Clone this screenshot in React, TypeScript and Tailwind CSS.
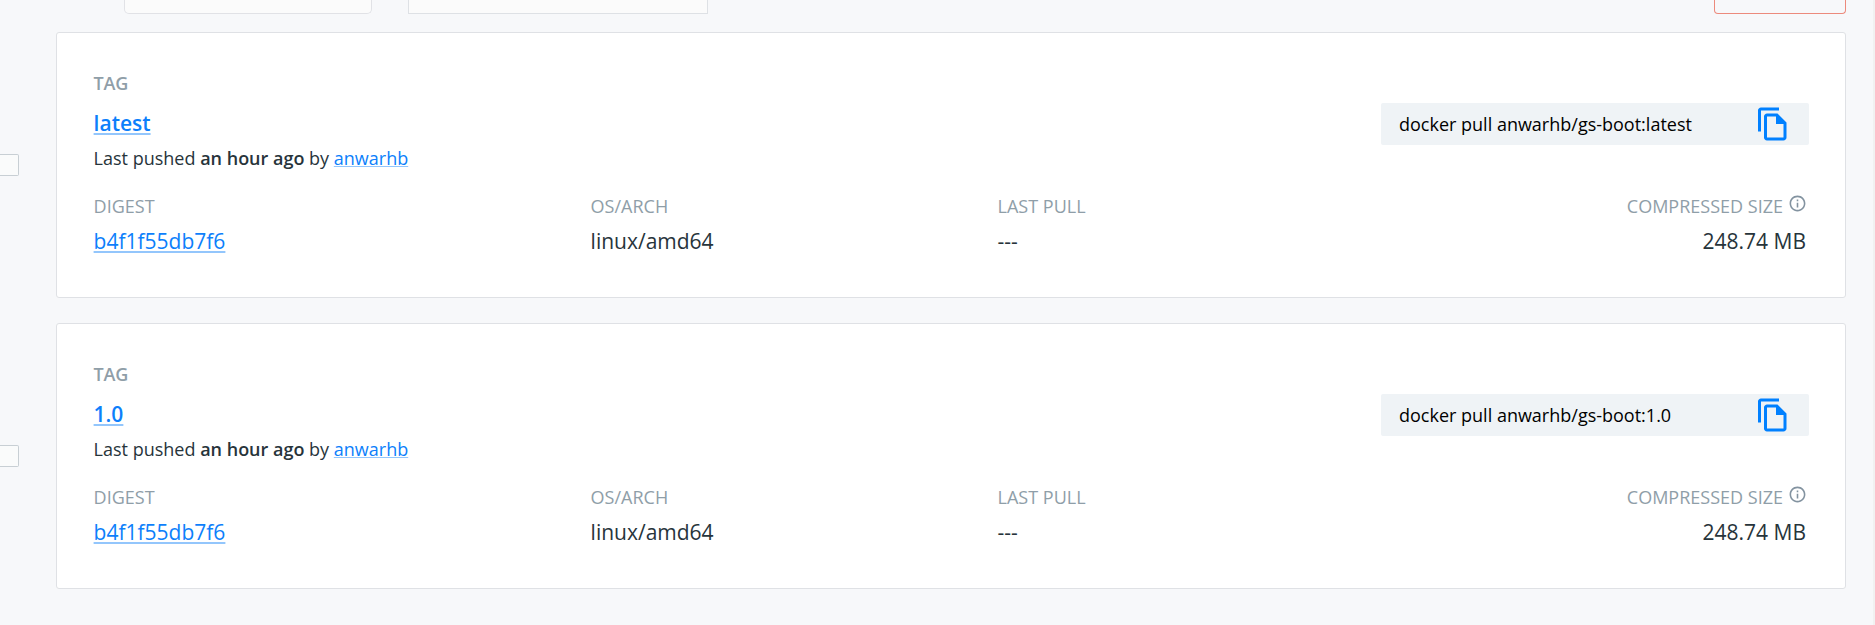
import React from "react";

type Tag = { name: string; digest: string; arch: string; lastPull: string; size: string };

const tags: Tag[] = [
  { name: "latest", digest: "b4f1f55db7f6", arch: "linux/amd64", lastPull: "---", size: "248.74 MB" },
  { name: "1.0", digest: "b4f1f55db7f6", arch: "linux/amd64", lastPull: "---", size: "248.74 MB" },
];

const linkClass = "text-[#0d7ffb] underline decoration-[#93c6fc] [text-decoration-skip-ink:none]";

function CopyIcon() {
  return (
    <svg viewBox="0 0 24 24" className="block h-9 w-9 fill-[#0080ff]">
      <path d="M16 1H4c-1.1 0-2 .9-2 2v14h2V3h12V1zm-1 4H8c-1.1 0-1.99.9-1.99 2L6 21c0 1.1.89 2 1.99 2H19c1.1 0 2-.9 2-2V11l-6-6zM8 21V7h6v5h5v9H8z" />
    </svg>
  );
}

function InfoIcon() {
  return (
    <svg viewBox="0 0 24 24" className="block h-[19px] w-[19px] fill-[#8393a0]">
      <path d="M11 7h2v2h-2zm0 4h2v6h-2zm1-9C6.48 2 2 6.48 2 12s4.48 10 10 10 10-4.48 10-10S17.52 2 12 2zm0 18c-4.41 0-8-3.59-8-8s3.59-8 8-8 8 3.59 8 8-3.59 8-8 8z" />
    </svg>
  );
}

function Column({ label, className, children }: { label: string; className: string; children: React.ReactNode }) {
  return (
    <div className={className}>
      <div className="text-lg leading-6 text-[#8f9ea8]">{label}</div>
      <div className="mt-[9px] text-[21px] leading-7">{children}</div>
    </div>
  );
}

function TagCard({ tag }: { tag: Tag }) {
  return (
    <div className="flex items-start">
      <div className="mt-[122px] h-[22px] w-[19px] shrink-0 rounded-r-[2px] border border-l-0 border-[#c8cfd4] bg-[#fafbfb]" />
      <section className="ml-[37px] h-[266px] w-[1790px] rounded-[3px] border border-[#dfe1e5] bg-white pt-[38px] pr-9 pl-[36.6px]">
        <div className="flex justify-between">
          <div>
            <div className="text-lg leading-6 font-semibold tracking-[-0.2px] text-[#8f9ea8]">TAG</div>
            <div className="mt-[14px] text-[21px] leading-7 font-semibold">
              <a className={linkClass + " decoration-2 underline-offset-2"}>{tag.name}</a>
            </div>
            <div className="mt-[9px] text-lg leading-6 whitespace-nowrap">
              Last pushed <b className="font-semibold">an hour ago</b> by{" "}
              <a className={linkClass + " decoration-1 underline-offset-1"}>anwarhb</a>
            </div>
          </div>
          <div className="mt-8 flex h-[42px] w-[428px] items-center justify-between rounded-[2px] bg-[#eff3f6] pr-[18px] pl-[18px]">
            <span className="text-lg leading-6 text-black">docker pull anwarhb/gs-boot:{tag.name}</span>
            <CopyIcon />
          </div>
        </div>
        <div className="mt-6 flex">
          <Column label="DIGEST" className="w-[497px]">
            <a className={linkClass + " decoration-2 underline-offset-2"}>{tag.digest}</a>
          </Column>
          <Column label="OS/ARCH" className="w-[407px]">{tag.arch}</Column>
          <Column label="LAST PULL" className="flex-1">{tag.lastPull}</Column>
          <div className="pr-[3px] text-right">
            <div className="-mr-[1px] flex text-lg leading-6 text-[#8f9ea8]">
              COMPRESSED SIZE
              <span className="ml-[5px]">
                <InfoIcon />
              </span>
            </div>
            <div className="mt-[9px] text-[21px] leading-7">{tag.size}</div>
          </div>
        </div>
      </section>
    </div>
  );
}

export default function App() {
  return (
    <div className="flex h-[625px] w-[1875px] justify-between overflow-hidden bg-[#f7f8fa] font-['Open_Sans','Noto_Sans',sans-serif] text-[#27343b]">
      <main>
        <div className="flex h-[14px] w-[1846px] pl-[124px]">
          <div className="w-[248px] rounded-b-[5px] border border-t-0 border-[#e1e2e6] bg-[#fbfbfb]" />
          <div className="ml-9 w-[300px] border border-t-0 border-[#dee1e5] bg-[#fbfbfb]" />
          <div className="ml-auto w-[132px] rounded-b-[4px] border border-t-0 border-[#ec8a7c]" />
        </div>
        <div className="mt-[18px] flex flex-col gap-[25px]">
          {tags.map((tag) => (
            <TagCard key={tag.name} tag={tag} />
          ))}
        </div>
      </main>
      <div className="w-[2px] bg-[#f1f1f1]" />
    </div>
  );
}
